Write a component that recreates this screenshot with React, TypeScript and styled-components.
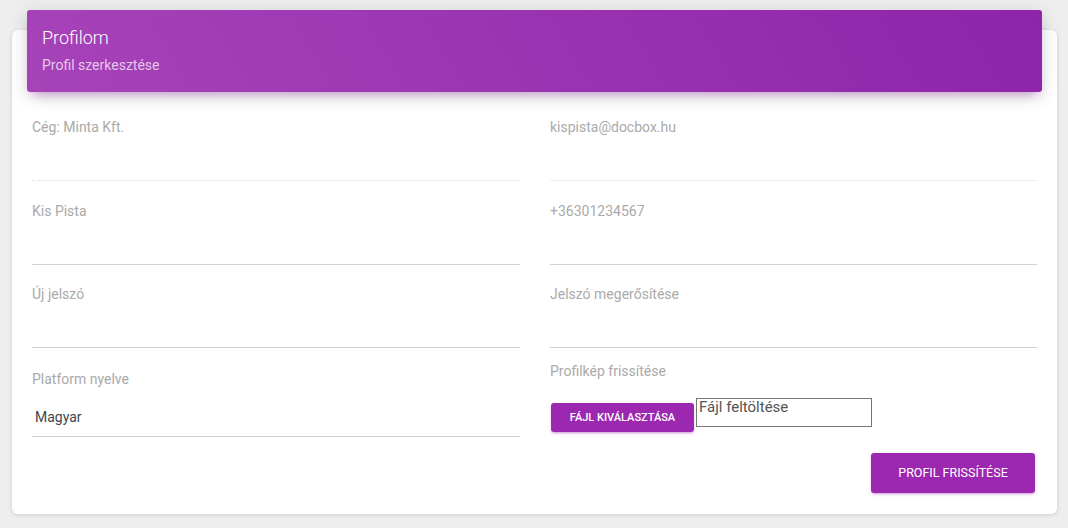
import React from "react";
import styled, { createGlobalStyle } from "styled-components";

const Global = createGlobalStyle`
  html, body { margin: 0; padding: 0; background: #eeeeee; }
  body { font-family: Roboto, "Helvetica Neue", Arial, sans-serif; }
  * { box-sizing: border-box; }
`;

const Page = styled.div`
  padding: 30px 11px 14px 12px;
  min-height: 528px;
`;

const Card = styled.div`
  background: #fff;
  border-radius: 6px;
  box-shadow: 0 1px 4px 0 rgba(0, 0, 0, 0.14);
`;

const Header = styled.div`
  position: relative;
  top: -20px;
  margin: 0 15px -20px;
  height: 82px;
  padding: 15px 15px;
  border-radius: 3px;
  background: linear-gradient(60deg, #a743b9, #8e24aa);
  box-shadow: 0 4px 20px 0 rgba(0, 0, 0, 0.14), 0 7px 10px -5px rgba(156, 39, 176, 0.4);
  color: #fff;
`;

const Title = styled.h4`
  margin: 0 0 5px;
  font-size: 18px;
  line-height: 25px;
  font-weight: 300;
`;

const Subtitle = styled.p`
  margin: 0;
  font-size: 14px;
  line-height: 20px;
  font-weight: 400;
  color: rgba(255, 255, 255, 0.72);
`;

const Body = styled.div`
  padding: 27px 20px 21px;
`;

const Grid = styled.div`
  display: grid;
  grid-template-columns: 488px 487px;
  column-gap: 30px;
  row-gap: 21.5px;
  align-items: start;
`;

const Field = styled.div<{ $shift?: number }>`
  display: flex;
  flex-direction: column;
  margin-top: ${(p) => p.$shift ?? 0}px;
`;

const Label = styled.label`
  font-size: 14px;
  line-height: 16px;
  color: #aaaaaa;
`;

const InputLine = styled.div<{ $disabled?: boolean }>`
  height: 46px;
  border-bottom: 1px ${(p) => (p.$disabled ? "dotted #dedede" : "solid #d2d2d2")};
`;

const SelectLine = styled.div`
  height: 50px;
  padding: 22px 0 0 3px;
  font-size: 14px;
  line-height: 16px;
  color: #3e4650;
  border-bottom: 1px solid #d2d2d2;
`;

const Upload = styled.div`
  margin-top: -7px;
  display: flex;
  flex-direction: column;
`;

const UploadRow = styled.div`
  margin-top: 19px;
  display: flex;
  align-items: flex-start;
  padding-left: 1px;
`;

const Button = styled.button<{ $big?: boolean }>`
  border: none;
  border-radius: 3px;
  background: #9c27b0;
  color: #fff;
  font-family: Roboto, Arial, sans-serif;
  font-weight: ${(p) => (p.$big ? 400 : 500)};
  text-transform: uppercase;
  cursor: pointer;
  box-shadow: 0 2px 2px 0 rgba(156, 39, 176, 0.14), 0 3px 1px -2px rgba(156, 39, 176, 0.2),
    0 1px 5px 0 rgba(156, 39, 176, 0.12);
  height: ${(p) => (p.$big ? "40px" : "29px")};
  width: ${(p) => (p.$big ? "164px" : "143px")};
  font-size: ${(p) => (p.$big ? "12.5px" : "11px")};
  margin-top: ${(p) => (p.$big ? "0" : "5px")};
  padding: 0;
`;

const FileBox = styled.span`
  display: inline-block;
  margin-left: 2px;
  width: 176px;
  height: 29px;
  border: 1px solid #767676;
  padding: 0 0 0 2px;
  font-size: 15px;
  line-height: 17px;
  color: #555;
`;

const Footer = styled.div`
  margin-top: 16px;
  display: flex;
  justify-content: flex-end;
  padding-right: 2px;
`;

export default function App() {
  return (
    <>
      <Global />
      <Page>
        <Card>
          <Header>
            <Title>Profilom</Title>
            <Subtitle>Profil szerkesztése</Subtitle>
          </Header>
          <Body>
            <Grid>
              <Field>
                <Label>Cég: Minta Kft.</Label>
                <InputLine $disabled />
              </Field>
              <Field>
                <Label>kispista@docbox.hu</Label>
                <InputLine $disabled />
              </Field>
              <Field>
                <Label>Kis Pista</Label>
                <InputLine />
              </Field>
              <Field>
                <Label>+36301234567</Label>
                <InputLine />
              </Field>
              <Field>
                <Label>Új jelszó</Label>
                <InputLine />
              </Field>
              <Field>
                <Label>Jelszó megerősítése</Label>
                <InputLine />
              </Field>
              <Field $shift={1}>
                <Label>Platform nyelve</Label>
                <SelectLine>Magyar</SelectLine>
              </Field>
              <Upload>
                <Label>Profilkép frissítése</Label>
                <UploadRow>
                  <Button>Fájl kiválasztása</Button>
                  <FileBox>Fájl feltöltése</FileBox>
                </UploadRow>
              </Upload>
            </Grid>
            <Footer>
              <Button $big>Profil frissítése</Button>
            </Footer>
          </Body>
        </Card>
      </Page>
    </>
  );
}
